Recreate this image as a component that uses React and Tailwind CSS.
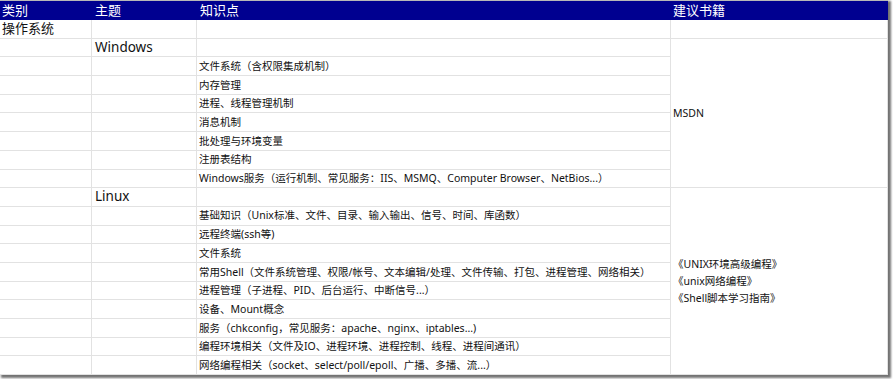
import React from "react";

const windowsItems = [
  "文件系统（含权限集成机制）",
  "内存管理",
  "进程、线程管理机制",
  "消息机制",
  "批处理与环境变量",
  "注册表结构",
  "Windows服务（运行机制、常见服务：IIS、MSMQ、Computer Browser、NetBios...）",
];

const linuxItems = [
  "基础知识（Unix标准、文件、目录、输入输出、信号、时间、库函数）",
  "远程终端(ssh等)",
  "文件系统",
  "常用Shell（文件系统管理、权限/帐号、文本编辑/处理、文件传输、打包、进程管理、网络相关）",
  "进程管理（子进程、PID、后台运行、中断信号...）",
  "设备、Mount概念",
  "服务（chkconfig，常见服务：apache、nginx、iptables...)",
  "编程环境相关（文件及IO、进程环境、进程控制、线程、进程间通讯）",
  "网络编程相关（socket、select/poll/epoll、广播、多播、流...）",
];

const cell = "border-r border-b border-[#e2e2e2] flex items-center overflow-hidden whitespace-nowrap";

const Item = ({ text }) => (
  <>
    <div className={cell}></div>
    <div className={cell}></div>
    <div className={`${cell} pl-[2px] text-[10.5px]`}>{text}</div>
  </>
);

const App = () => {
  return (
    <div
      className="w-[893px] h-[379px] bg-white text-[#111]"
      style={{ fontFamily: '"Noto Sans", "Noto Sans CJK SC", sans-serif' }}
    >
      <div className="w-[888px] h-[375px] overflow-hidden border-t border-[#b8b8b8] shadow-[2px_2px_2px_1px_rgba(0,0,0,0.55)]">
        {/* header */}
        <div className="grid grid-cols-[92px_105px_474px_217px] h-[19px] bg-[#000090] text-white text-[13px] leading-none">
          <div className="flex items-center pl-[2px]">类别</div>
          <div className="flex items-center pl-[3px]">主题</div>
          <div className="flex items-center pl-[3px]">知识点</div>
          <div className="flex items-center pl-[2px]">建议书籍</div>
        </div>

        <div className="grid grid-cols-[92px_105px_474px_217px] auto-rows-[18.7px] leading-none">
          {/* 操作系统 */}
          <div className={`${cell} pl-[2px] text-[13px]`}>操作系统</div>
          <div className={cell}></div>
          <div className={cell}></div>
          <div className={cell}></div>

          {/* Windows */}
          <div className={cell}></div>
          <div className={`${cell} pl-[3px] text-[13.5px]`}>Windows</div>
          <div className={cell}></div>
          <div className={`${cell} row-span-8 pl-[2px] text-[10.5px]`}>MSDN</div>
          {windowsItems.map((t) => (
            <Item key={t} text={t} />
          ))}

          {/* Linux */}
          <div className={cell}></div>
          <div className={`${cell} pl-[3px] text-[13.5px]`}>Linux</div>
          <div className={cell}></div>
          <div className={`${cell} row-span-10 pl-[2px] text-[10.5px] leading-[17px]`}>
            <div>
              <div>《UNIX环境高级编程》</div>
              <div>《unix网络编程》</div>
              <div>《Shell脚本学习指南》</div>
            </div>
          </div>
          {linuxItems.map((t) => (
            <Item key={t} text={t} />
          ))}
        </div>
      </div>
    </div>
  );
};

export default App;
